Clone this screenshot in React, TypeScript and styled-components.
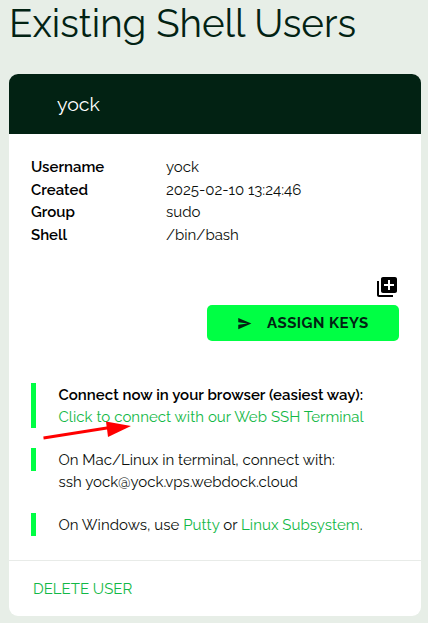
import React from "react";
import styled, { createGlobalStyle } from "styled-components";

const Global = createGlobalStyle`
  * { box-sizing: border-box; }
  body {
    margin: 0;
    background: #e7eee7;
    color: #0b0f0c;
    font: 400 15px/22.5px Raleway, Lato, "Open Sans", sans-serif;
  }
`;
const Page = styled.main`
  position: relative;
  width: 428px;
  height: 623px;
  overflow: hidden;
  padding: 0 7px 0 9px;
`;
const Title = styled.h1`
  margin: 0;
  height: 74px;
  color: #022213;
  font-size: 38.5px;
  font-weight: 400;
  line-height: 48px;
  white-space: nowrap;
`;
const Card = styled.section`
  height: 542px;
  border-radius: 9px;
  overflow: hidden;
  background: #fff;
  display: flex;
  flex-direction: column;
`;
const CardHeader = styled.header`
  flex: none;
  height: 60px;
  padding-left: 48px;
  background: #022213;
  color: #fff;
  font-size: 19.5px;
  line-height: 62px;
`;
const CardBody = styled.div`
  flex: 1;
  padding: 22px 22px 0;
`;
const Details = styled.dl`
  margin: 0;
  display: grid;
  grid-template-columns: 135px 1fr;
  grid-auto-rows: 22.5px;
`;
const Term = styled.dt`
  color: #000;
  font-weight: 600;
`;
const Value = styled.dd`
  margin: 0;
`;
const Text = styled.span<{ $track?: number }>`
  letter-spacing: ${(p) => p.$track ?? 0}px;
  white-space: nowrap;
`;
const Strong = styled.b`
  color: #000;
  font-weight: 600;
`;
const Actions = styled.div`
  display: flex;
  flex-direction: column;
  align-items: flex-end;
  margin-top: 29px;
`;
const AddIcon = styled.svg`
  display: block;
  width: 24px;
  height: 24px;
  margin-bottom: 6px;
`;
const AssignButton = styled.button`
  display: flex;
  align-items: center;
  width: 192px;
  height: 36px;
  padding: 0 0 0 29px;
  border: 0;
  border-radius: 5px;
  background: #00ff44;
  color: #022213;
  font: inherit;
  font-weight: 700;
`;
const SendIcon = styled.svg`
  width: 15px;
  height: 15px;
  margin: 0 15px 0 1px;
`;
const Notes = styled.div`
  display: flex;
  flex-direction: column;
  margin-top: 42px;
`;
const Note = styled.div<{ $height: number; $gap: number }>`
  height: ${(p) => p.$height}px;
  margin-bottom: ${(p) => p.$gap}px;
  border-left: 5px solid #00ff44;
  padding: 0.75px 0 0 22.5px;
  line-height: 22.5px;
  white-space: nowrap;
`;
const Link = styled.a`
  color: #12b846;
  text-decoration: none;
`;
const CardFooter = styled.footer`
  flex: none;
  height: 56px;
  padding-left: 24px;
  border-top: 1px solid #e8ebe8;
  line-height: 56px;
`;
const Pointer = styled.svg`
  position: absolute;
  left: 40px;
  top: 415px;
  width: 96px;
  height: 30px;
`;

const details = [
  { term: "Username", value: "yock" },
  { term: "Created", value: "2025-02-10 13:24:46" },
  { term: "Group", value: "sudo" },
  { term: "Shell", value: "/bin/bash" },
];

export default function App() {
  return (
    <Page>
      <Global />
      <Title>Existing Shell Users</Title>
      <Card>
        <CardHeader>yock</CardHeader>
        <CardBody>
          <Details>
            {details.map((d) => (
              <React.Fragment key={d.term}>
                <Term>{d.term}</Term>
                <Value>{d.value}</Value>
              </React.Fragment>
            ))}
          </Details>
          <Actions>
            <AddIcon viewBox="0 0 24 24">
              <path d="M4 6H2v14c0 1.1.9 2 2 2h14v-2H4V6zm16-4H8c-1.1 0-2 .9-2 2v12c0 1.1.9 2 2 2h12c1.100 0 2-.9 2-2V4c0-1.100-.9-2-2-2zm-1 9h-4v4h-2v-4H9V9h4V5h2v4h4v2z" />
            </AddIcon>
            <AssignButton>
              <SendIcon viewBox="0 0 24 24" fill="currentColor">
                <path d="M2 21l21-9L2 3v7l15 2-15 2z" />
              </SendIcon>
              <Text $track={0.5}>ASSIGN KEYS</Text>
            </AssignButton>
          </Actions>
          <Notes>
            <Note $height={45} $gap={20}>
              <Strong><Text $track={0.04}>Connect now in your browser (easiest way):</Text></Strong>
              <br />
              <Link><Text $track={0.045}>Click to connect with our Web SSH Terminal</Text></Link>
            </Note>
            <Note $height={23} $gap={42}>
              <Text $track={0.02}>On Mac/Linux in terminal, connect with:</Text>
              <br />
              <Text>ssh yock@yock.vps.webdock.cloud</Text>
            </Note>
            <Note $height={23} $gap={0}>
              <Text $track={0.035}>On Windows, use <Link>Putty</Link> or <Link>Linux Subsystem</Link>.</Text>
            </Note>
          </Notes>
        </CardBody>
        <CardFooter><Link>DELETE USER</Link></CardFooter>
      </Card>
      <Pointer viewBox="0 0 96 30">
        <path d="M3.500 23 70 12.500" stroke="#f00" strokeWidth="2.800" />
        <path d="M66 6.500 91 11 68 22z" fill="#f00" />
      </Pointer>
    </Page>
  );
}
